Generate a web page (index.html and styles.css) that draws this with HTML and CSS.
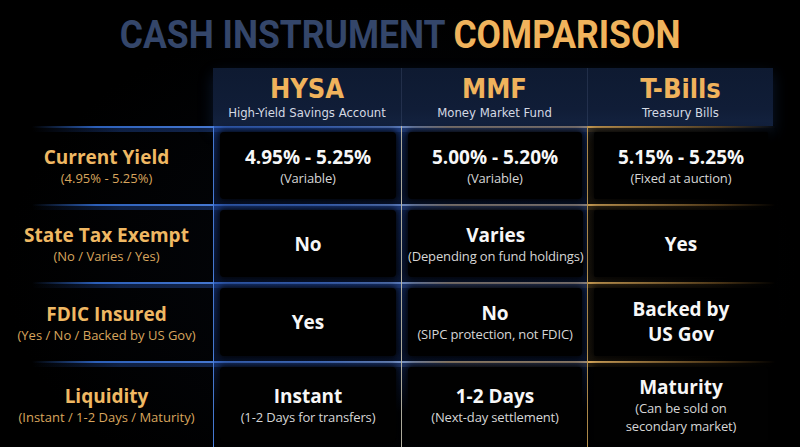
FILE: index.html
```html
<!DOCTYPE html>
<html lang="en">
<head>
<meta charset="utf-8">
<title>Cash Instrument Comparison</title>
<link rel="stylesheet" href="styles.css">
</head>
<body>
<div class="page">
  <div class="title-wrap">
    <h1 class="title"><span class="t-blue">CASH INSTRUMENT</span> <span class="t-gold">COMPARISON</span></h1>
  </div>
  <div class="table">
    <div class="head-row">
      <div class="head-spacer"></div>
      <div class="head-band">
        <div class="head-cell"><div class="h-name">HYSA</div><div class="h-sub">High-Yield Savings Account</div></div>
        <div class="head-cell div"><div class="h-name">MMF</div><div class="h-sub">Money Market Fund</div></div>
        <div class="head-cell div"><div class="h-name">T-Bills</div><div class="h-sub">Treasury Bills</div></div>
      </div>
    </div>

    <div class="row r1">
      <div class="label"><div class="l-name">Current Yield</div><div class="l-sub">(4.95% - 5.25%)</div></div>
      <div class="cell c-hysa"><div class="box"><div class="v">4.95% - 5.25%</div><div class="s">(Variable)</div></div></div>
      <div class="cell c-mmf"><div class="box"><div class="v">5.00% - 5.20%</div><div class="s">(Variable)</div></div></div>
      <div class="cell c-tb"><div class="box"><div class="v">5.15% - 5.25%</div><div class="s">(Fixed at auction)</div></div></div>
    </div>

    <div class="row r2">
      <div class="label"><div class="l-name">State Tax Exempt</div><div class="l-sub">(No / Varies / Yes)</div></div>
      <div class="cell c-hysa"><div class="box"><div class="v">No</div></div></div>
      <div class="cell c-mmf"><div class="box"><div class="v">Varies</div><div class="s">(Depending on fund holdings)</div></div></div>
      <div class="cell c-tb"><div class="box"><div class="v">Yes</div></div></div>
    </div>

    <div class="row r3">
      <div class="label"><div class="l-name">FDIC Insured</div><div class="l-sub">(Yes / No / Backed by US Gov)</div></div>
      <div class="cell c-hysa"><div class="box"><div class="v">Yes</div></div></div>
      <div class="cell c-mmf"><div class="box"><div class="v">No</div><div class="s">(SIPC protection, not FDIC)</div></div></div>
      <div class="cell c-tb"><div class="box"><div class="v two">Backed by<br>US Gov</div></div></div>
    </div>

    <div class="row r4">
      <div class="label"><div class="l-name">Liquidity</div><div class="l-sub">(Instant / 1-2 Days / Maturity)</div></div>
      <div class="cell c-hysa"><div class="box"><div class="v">Instant</div><div class="s">(1-2 Days for transfers)</div></div></div>
      <div class="cell c-mmf"><div class="box"><div class="v">1-2 Days</div><div class="s">(Next-day settlement)</div></div></div>
      <div class="cell c-tb"><div class="box"><div class="v">Maturity</div><div class="s two">(Can be sold on<br>secondary market)</div></div></div>
    </div>
  </div>
</div>
</body>
</html>
```

FILE: styles.css
```css
* { box-sizing: border-box; }
html, body { margin: 0; padding: 0; background: #000; }
body { width: 800px; height: 447px; overflow: hidden; font-family: "Open Sans", "Noto Sans", sans-serif; }

.page { width: 800px; height: 447px; display: flex; flex-direction: column;
  background: radial-gradient(ellipse at 50% 60%, #04070d 0%, #000 70%); }

.title-wrap { height: 68px; display: flex; align-items: center; justify-content: center; padding-top: 1px; }
.title { margin: 0; white-space: nowrap;
  font-family: "Roboto", sans-serif; font-weight: 700;
  font-size: 39px; line-height: 44px; letter-spacing: 0; transform: scaleX(0.91); }
.t-blue { color: #34466a; }
.t-gold { color: #f0b35c; }

.table { display: flex; flex-direction: column; }

.head-row { display: flex; height: 58px; }
.head-spacer { width: 213px; }
.head-band { width: 560px; display: flex;
  background: linear-gradient(180deg, #0e1a31 0%, #101d37 70%, #13223f 100%);
  box-shadow: 0 6px 14px rgba(40, 90, 170, 0.25); }
.head-cell { flex: 1 1 0; display: flex; flex-direction: column; align-items: center; justify-content: center;
  font-family: "DejaVu Sans Condensed", "DejaVu Sans", sans-serif; padding-top: 2px; }
.head-cell:first-child { flex: 0 0 188px; }
.head-cell.div { border-left: 1px solid rgba(120, 140, 180, 0.18); }
.h-name { color: #f0b35c; font-weight: 700; font-size: 27px; line-height: 30px; }
.h-sub { color: #d4d9e3; font-size: 13px; line-height: 18px; }

.row { display: flex;
  background:
    linear-gradient(90deg, rgba(0,0,0,0) 4%, #2c5fb8 12%, #5d8ee6 40%, #9fb6d8 50%, #d7a757 56%, #d8a85c 75%, rgba(170,120,50,0.5) 90%, rgba(0,0,0,0) 97%) top left / 100% 2px no-repeat,
    linear-gradient(90deg, rgba(0,0,0,0) 4%, rgba(40,90,190,0.35) 15%, rgba(60,110,220,0.35) 48%, rgba(200,150,70,0.25) 58%, rgba(200,150,70,0.12) 88%, rgba(0,0,0,0) 97%) 0 2px / 100% 4px no-repeat; }
.r1 { height: 78px; }
.r2 { height: 78px; }
.r3 { height: 79px; }
.r4 { height: 86px; }

.label { width: 213px; display: flex; flex-direction: column; align-items: center; justify-content: center; padding-top: 2px; }
.l-name { color: #efb863; font-weight: 700; font-size: 19px; line-height: 24px; }
.l-sub { color: #d8a55d; font-size: 13px; line-height: 18px; white-space: nowrap; }

.cell { padding: 6px 5px 5px 6px; display: flex; }
.c-hysa { width: 188px; border-left: 1.5px solid #4a80e0;
  background: linear-gradient(180deg, rgba(30,70,160,0.55), rgba(20,50,120,0.35)); }
.c-mmf { width: 186px; border-left: 1.5px solid #b9b6a6;
  background: linear-gradient(180deg, rgba(30,70,160,0.45), rgba(20,50,120,0.3)); }
.c-tb { width: 186px; border-left: 1.5px solid #b8924e;
  background: linear-gradient(90deg, rgba(120,90,40,0.2), rgba(0,0,0,0) 80%); }
.r4 .c-hysa, .r4 .c-mmf { background: linear-gradient(180deg, rgba(30,70,160,0.35), rgba(0,0,0,0) 60%); }
.r4 .c-tb { background: transparent; }

.box { flex: 1; background: #000; border-radius: 4px; display: flex; flex-direction: column; align-items: center; justify-content: center;
  box-shadow: 0 0 6px 2px rgba(0,0,0,0.9); text-align: center; }
.c-tb .box { border-radius: 2px; }
.r4 .box { background: #010101; }

.v { color: #f7f7f7; font-weight: 700; font-size: 19px; line-height: 24px; }
.v.two { line-height: 25px; }
.s { color: #d6d6d6; font-size: 13px; line-height: 18px; white-space: nowrap; letter-spacing: -0.15px; }
.s.two { line-height: 18px; }
```
